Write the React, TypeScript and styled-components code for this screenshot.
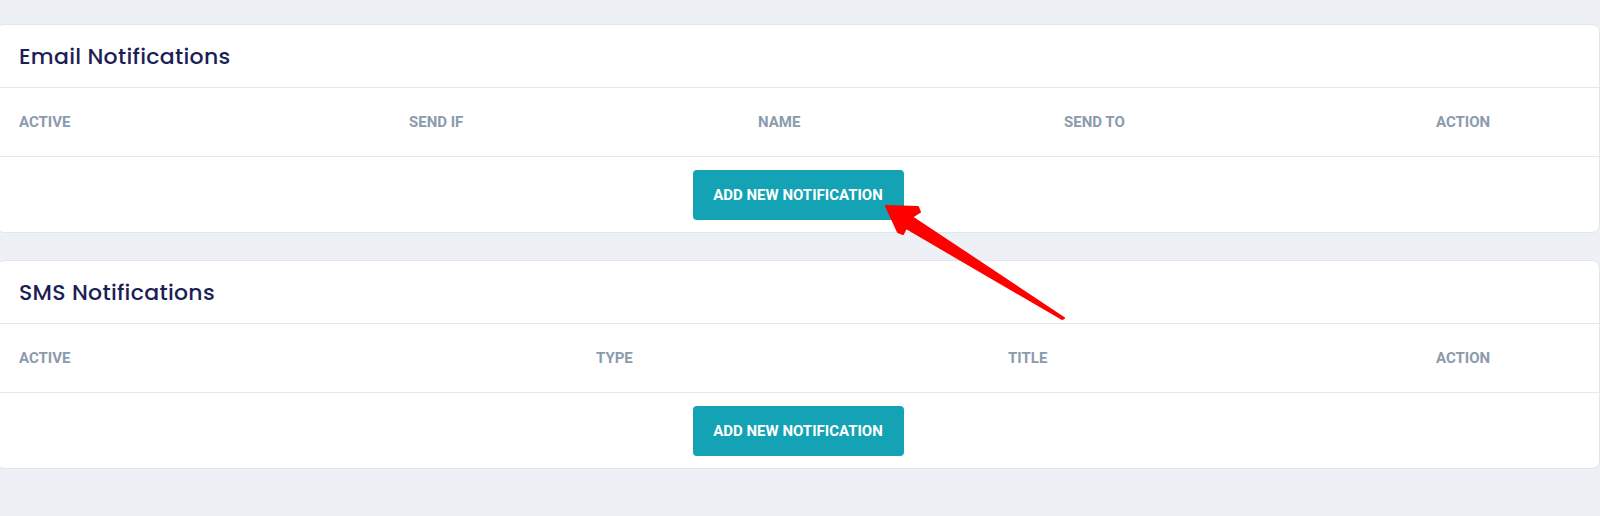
import React from "react";
import styled, { createGlobalStyle } from "styled-components";

const GlobalStyle = createGlobalStyle`
  html, body {
    margin: 0;
    padding: 0;
    background: #edf1f6;
  }
  body {
    font-family: Roboto, "Liberation Sans", Arial, sans-serif;
  }
  * { box-sizing: border-box; }
`;

const Page = styled.div`
  position: relative;
  width: 1600px;
  height: 516px;
  padding-top: 24px;
  overflow: hidden;
  background: #edf1f6;
`;

const Card = styled.section`
  margin: 0 0 27px -4px;
  width: 1604px;
  background: #ffffff;
  border: 1px solid #e1e6ed;
  border-radius: 8px;
  overflow: hidden;
`;

const CardHeader = styled.header`
  height: 63px;
  display: flex;
  align-items: center;
  padding-left: 22px;
  border-bottom: 1px solid #e4e8ee;
`;

const Title = styled.h2`
  margin: 0;
  font-family: Poppins, "Noto Sans", "Open Sans", sans-serif;
  font-weight: 500;
  font-size: 22px;
  letter-spacing: 0.3px;
  color: #1c1f55;
`;

const HeadRow = styled.div<{ $cols: string }>`
  display: grid;
  grid-template-columns: ${(p) => p.$cols};
  align-items: center;
  height: 69px;
  padding-left: 22px;
  border-bottom: 1px solid #e6e9ee;
`;

const HeadCell = styled.div`
  font-family: Roboto, "Liberation Sans", Arial, sans-serif;
  font-weight: 700;
  font-size: 15px;
  color: #8b9bab;
  text-transform: uppercase;
  white-space: nowrap;
`;

const BodyRow = styled.div`
  height: 75px;
  display: flex;
  align-items: center;
  justify-content: center;
`;

const AddButton = styled.button`
  width: 211px;
  height: 50px;
  border: none;
  border-radius: 4px;
  background: #14a2b5;
  color: #ffffff;
  font-family: Roboto, "Liberation Sans", Arial, sans-serif;
  font-weight: 700;
  font-size: 15px;
  text-transform: uppercase;
  cursor: pointer;
  padding: 0;
`;

const ArrowLayer = styled.svg`
  position: absolute;
  left: 0;
  top: 0;
  width: 1600px;
  height: 516px;
  pointer-events: none;
`;

type Section = {
  title: string;
  cols: string;
  headers: string[];
};

const sections: Section[] = [
  {
    title: "Email Notifications",
    cols: "390px 349px 306px 372px 1fr",
    headers: ["Active", "Send If", "Name", "Send To", "Action"],
  },
  {
    title: "SMS Notifications",
    cols: "577px 412px 428px 1fr",
    headers: ["Active", "Type", "Title", "Action"],
  },
];

export default function App() {
  return (
    <>
      <GlobalStyle />
      <Page>
        {sections.map((s) => (
          <Card key={s.title}>
            <CardHeader>
              <Title>{s.title}</Title>
            </CardHeader>
            <HeadRow $cols={s.cols}>
              {s.headers.map((h) => (
                <HeadCell key={h}>{h}</HeadCell>
              ))}
            </HeadRow>
            <BodyRow>
              <AddButton>Add New Notification</AddButton>
            </BodyRow>
          </Card>
        ))}
        <ArrowLayer viewBox="0 0 1600 516">
          <polygon
            points="886,206 918,207 920,212 912,217 1064,318 1062,319 906,228 903,234 898,232"
            fill="#ff0000"
            stroke="#ff0000"
            strokeWidth="2"
            strokeLinejoin="round"
          />
        </ArrowLayer>
      </Page>
    </>
  );
}
